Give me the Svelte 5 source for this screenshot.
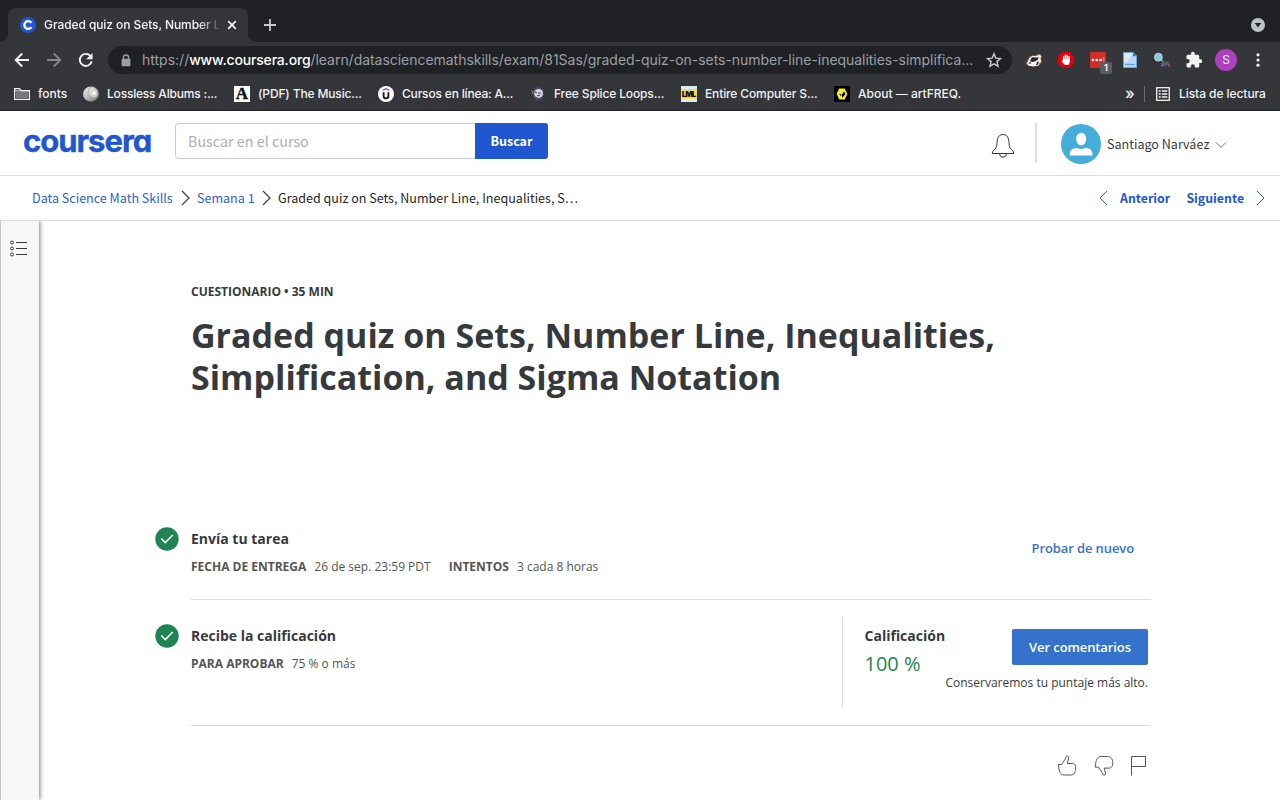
<script>
  const bookmarks = [
    { icon: 'folder', label: 'fonts', tracking: 0 },
    { icon: 'disc', label: 'Lossless Albums :...', tracking: -0.2 },
    { icon: 'letter', label: '(PDF) The Music...', tracking: -0.14 },
    { icon: 'udemy', label: 'Cursos en línea: A...', tracking: -0.18 },
    { icon: 'splice', label: 'Free Splice Loops...', tracking: -0.14 },
    { icon: 'lml', label: 'Entire Computer S...', tracking: -0.13 },
    { icon: 'freq', label: 'About — artFREQ.', tracking: 0 }
  ];
</script>

<div class="screen">
  <div class="tabs">
    <div class="tab">
      <svg class="fav" width="16" height="16" viewBox="0 0 16 16"><circle cx="8" cy="8" r="8" fill="#2156d1" /><path d="M11.3 5.9A3.8 3.8 0 1 0 11.3 10.1" fill="none" stroke="#fff" stroke-width="2.3" /></svg>
      <span class="tabtitle">Graded quiz on Sets, Number L</span>
      <svg class="close" width="10" height="10" viewBox="0 0 10 10"><path d="M1.2 1.2l7.6 7.6M8.8 1.2L1.2 8.8" stroke="#f1f3f4" stroke-width="1.7" /></svg>
    </div>
    <svg class="plus" width="14" height="14" viewBox="0 0 14 14"><path d="M7 1v12M1 7h12" stroke="#c8cacd" stroke-width="1.8" /></svg>
    <svg class="tabmenu" width="14" height="14" viewBox="0 0 14 14"><circle cx="7" cy="7" r="7" fill="#bdc1c6" /><path d="M3.8 5h6.4L7 9.4z" fill="#202124" /></svg>
  </div>

  <div class="toolbar">
    <svg class="nav" width="16" height="16" viewBox="0 0 16 16"><path d="M15 8H2M8.2 1.5L1.7 8l6.5 6.5" fill="none" stroke="#f1f3f4" stroke-width="1.9" /></svg>
    <svg class="nav" width="16" height="16" viewBox="0 0 16 16"><path d="M1 8h13M7.8 1.5L14.3 8l-6.5 6.5" fill="none" stroke="#85878a" stroke-width="1.8" /></svg>
    <svg class="nav" width="16" height="16" viewBox="0 0 16 16"><path d="M13.7 9.2A6 6 0 1 1 12.3 3.9" fill="none" stroke="#f1f3f4" stroke-width="1.9" /><path d="M14.5 1v6.3H8.2z" fill="#f1f3f4" /></svg>
    <div class="address">
      <svg class="lock" width="10" height="13" viewBox="0 0 10 13"><path d="M2.4 5.5V3.6a2.6 2.6 0 0 1 5.2 0v1.9" fill="none" stroke="#9aa0a6" stroke-width="1.4" /><rect x=".6" y="4.8" width="8.8" height="7.4" rx="1" fill="#9aa0a6" /></svg>
      <span class="url"><span class="scheme">https://</span><span class="host">www.coursera.org</span><span class="path">/learn/datasciencemathskills/exam/81Sas/graded-quiz-on-sets-number-line-inequalities-simplifica...</span></span>
      <svg class="star" width="16" height="16" viewBox="0 0 16 16"><path d="M8 1.7l1.8 4.4 4.7.4-3.6 3.1 1.1 4.6L8 11.8l-4 2.4 1.1-4.6-3.6-3.1 4.7-.4z" fill="none" stroke="#c8cacd" stroke-width="1.4" /></svg>
    </div>
    <div class="extensions">
      <svg width="18" height="16" viewBox="0 0 18 16"><path d="M1.5 11.5L5 5l3-1.6 2 .6 5-1.6 1.5 2-1 2.2 1 3.1-3 3.8-5 1-5-.8z" fill="#f7f3ee" /><path d="M7 5.2l3 .2 4 .2-1.6 2.4L9.6 9.6 7 10l-2-1zM3 11.6l2-1.8 1.4 1.8zM12 10l2-.6-1 3-2 .8z" fill="#24272b" /><path d="M4.4 5.6l2-1.6M11.5 3l4-.8M1 10.6l1.4 2M14 12.6l2-2.4M2.6 8.4l1-2" stroke="#c4693d" stroke-width="1.1" /></svg>
      <svg width="18" height="16" viewBox="0 0 18 16"><path d="M5.5 0h7L17 4.6v6.8L12.5 16h-7L1 11.4V4.6z" fill="#e3000b" /><path d="M6.6 8V4.6M8.4 7.5V3.2M10.2 7.5V3.4M12 9V4.8" stroke="#fff" stroke-width="1.4" stroke-linecap="round" /><path d="M5.9 7h6.8v3.5L11.4 13H8L4.6 9.4l1-.8z" fill="#fff" /></svg>
      <span class="pass"><svg width="16" height="16" viewBox="0 0 16 16"><rect width="16" height="16" rx="1.5" fill="#d32d27" /><circle cx="3" cy="8" r="1.3" fill="#fff" /><circle cx="6.8" cy="8" r="1.3" fill="#fff" /><circle cx="10.5" cy="8" r="1.3" fill="#fff" /><path d="M13.8 5v4.5" stroke="#f0a09c" /></svg><b>1</b></span>
      <svg width="16" height="16" viewBox="0 0 16 16"><path d="M1.5.5h9.7l3.3 3.4v11.6h-13z" fill="#b9d9fa" stroke="#6ea4df" /><path d="M2 1h9l-6 9H2z" fill="#d9eafd" /><path d="M11 .5v3.7h3.5z" fill="#316fb8" /><path d="M3 12.4h10" stroke="#4d9be7" /></svg>
      <svg width="18" height="16" viewBox="0 0 18 16"><path d="M8.5 8l3 3" stroke="#8e929b" stroke-width="1.6" /><circle cx="5.4" cy="5.2" r="3.9" fill="#82cbe0" stroke="#b3dce5" /><path d="M8 12l2-3 2 1 3-1 1 3 1 1-3 0-3 2-3-2z" fill="#4b607d" /><path d="M15 12l2 3M10 13l-2 1" stroke="#bd5b48" stroke-width="1.2" /></svg>
      <svg width="18" height="18" viewBox="0 0 24 24"><path d="M20.5 11H19V7a2 2 0 0 0-2-2h-4V3.5a2.5 2.5 0 0 0-5 0V5H4a2 2 0 0 0-2 2v3.8h1.5a2.7 2.7 0 0 1 0 5.4H2V20a2 2 0 0 0 2 2h3.8v-1.5a2.7 2.7 0 0 1 5.4 0V22H17a2 2 0 0 0 2-2v-4h1.5a2.5 2.5 0 0 0 0-5z" fill="#f1f3f4" /></svg>
      <span class="user">S</span>
      <svg width="6" height="16" viewBox="0 0 6 16"><circle cx="3" cy="2.8" r="1.6" fill="#f1f3f4" /><circle cx="3" cy="8" r="1.6" fill="#f1f3f4" /><circle cx="3" cy="13.2" r="1.6" fill="#f1f3f4" /></svg>
    </div>
  </div>

  <div class="bookmarks">
    {#each bookmarks as b}
      <div class="bookmark">
        {#if b.icon === 'folder'}
          <svg width="16" height="16" viewBox="0 0 16 16"><path d="M.6 13.4V2.6h5l1.5 2h8.3v8.8z" fill="none" stroke="#f1f3f4" stroke-width="1.2" /><path d="M2 6h12v6H2z" fill="#77797b" /><path d="M1 4.9h14" stroke="#f1f3f4" /></svg>
        {:else if b.icon === 'disc'}
          <svg width="16" height="16" viewBox="0 0 16 16"><defs><linearGradient id="silver" x1="0" y1="0" x2="1" y2="1"><stop offset="0" stop-color="#eee" /><stop offset=".5" stop-color="#bbb" /><stop offset="1" stop-color="#666" /></linearGradient></defs><ellipse cx="8" cy="8" rx="8" ry="7.6" fill="url(#silver)" /><ellipse cx="10" cy="6.5" rx="4.4" ry="5.6" transform="rotate(-25 10 6.5)" fill="#ddd" stroke="#999" stroke-width=".6" opacity=".8" /><circle cx="11" cy="7" r="1.8" fill="#fafafa" /></svg>
        {:else if b.icon === 'letter'}
          <span class="letter">A</span>
        {:else if b.icon === 'udemy'}
          <svg width="16" height="16" viewBox="0 0 16 16"><circle cx="8" cy="8" r="8" fill="#fff" /><path d="M5.6 6.2v3.8a2.4 2.4 0 0 0 4.8 0V6.2" fill="none" stroke="#1c1d1f" stroke-width="1.9" /><path d="M4.9 4.4L8 2.7l3.1 1.7" fill="none" stroke="#a435f0" stroke-width="1.4" /></svg>
        {:else if b.icon === 'splice'}
          <svg width="16" height="16" viewBox="0 0 16 16"><path d="M3 3l5-2 5 2 1 6-2 4-5 2-4-4z" fill="#494766" /><ellipse cx="8.6" cy="7.4" rx="4.4" ry="4.5" fill="#d9d9e0" /><path d="M5 6l2 1M8 7h3M7 10l3-1" stroke="#4a4a5e" stroke-width="1.2" /><path d="M1 4l2 2-1 2" stroke="#7b79ad" fill="none" /></svg>
        {:else if b.icon === 'lml'}
          <span class="lml">LML</span>
        {:else}
          <svg width="16" height="16" viewBox="0 0 16 16"><rect width="16" height="16" fill="#000" /><path d="M5.3 2.5h5.4L13.4 8l-2.7 5.5H5.3L2.6 8z" fill="#f4ee31" /><path d="M8 12V8.2L10.2 5.4l1.2 2.8zM4.8 7.4l2.6 1v2.2z" fill="#000" /></svg>
        {/if}
        <span style="letter-spacing: {b.tracking}px">{b.label}</span>
      </div>
    {/each}
    <span class="more">»</span>
    <span class="bar"></span>
    <svg class="readicon" width="14" height="14" viewBox="0 0 14 14"><rect x=".7" y=".7" width="12.6" height="12.6" fill="none" stroke="#f1f3f4" stroke-width="1.3" /><path d="M2.7 4h2M2.7 7h2M2.7 10h2M5.8 4h5.5M5.8 7h5.5M5.8 10h5.5" stroke="#f1f3f4" stroke-width="1.5" /></svg>
    <span class="reading">Lista de lectura</span>
  </div>

  <header>
    <span class="logo">coursera</span>
    <div class="search"><span class="field">Buscar en el curso</span><span class="go">Buscar</span></div>
    <svg class="bell" width="24" height="26" viewBox="0 0 24 26"><path d="M1.2 20.5c0-3.5 4.1-3.8 4.6-8.2.4-4 0-10.8 6.2-10.8s5.8 6.8 6.2 10.8c.5 4.4 4.6 4.7 4.6 8.2zM8.6 20.8a3.4 3.4 0 0 0 6.8 0" fill="none" stroke="#373a3c" /></svg>
    <span class="vline"></span>
    <svg class="avatar" width="40" height="40" viewBox="0 0 40 40"><circle cx="20" cy="20" r="20" fill="#45add9" /><ellipse cx="20.2" cy="15" rx="5" ry="6.3" fill="#fff" /><path d="M8.7 31.6c0-5.8 2.3-7.5 7.4-7.7 2.4 1.5 5.6 1.5 8 0 5.2.2 7.5 2 7.5 7.7z" fill="#fff" /></svg>
    <span class="name">Santiago Narváez</span>
    <svg class="caret" width="12" height="8" viewBox="0 0 12 8"><path d="M1 1.4l5 5 5-5" fill="none" stroke="#6f7377" /></svg>
  </header>

  <nav class="crumbs">
    <span class="c1">Data Science Math Skills</span>
    <svg width="9" height="16" viewBox="0 0 9 16"><path d="M1 1l7 7-7 7" fill="none" stroke="#373a3c" stroke-width="1.2" /></svg>
    <span class="c2">Semana 1</span>
    <svg width="9" height="16" viewBox="0 0 9 16"><path d="M1 1l7 7-7 7" fill="none" stroke="#373a3c" stroke-width="1.2" /></svg>
    <span class="c3">Graded quiz on Sets, Number Line, Inequalities, S…</span>
    <div class="steps">
      <svg width="9" height="16" viewBox="0 0 9 16"><path d="M8 1L1 8l7 7" fill="none" stroke="#2a62d4" /></svg>
      <b class="prev">Anterior</b><b class="next">Siguiente</b>
      <svg width="9" height="16" viewBox="0 0 9 16"><path d="M1 1l7 7-7 7" fill="none" stroke="#2a62d4" /></svg>
    </div>
  </nav>

  <div class="page">
    <aside>
      <svg width="18" height="18" viewBox="0 0 18 18"><g fill="none" stroke="#373a3c"><circle cx="2" cy="2.5" r="1.5" /><circle cx="2" cy="8.5" r="1.5" /><circle cx="2" cy="14.5" r="1.5" /><path d="M6 2.5h11M6 8.5h11M6 14.5h11" /></g></svg>
    </aside>
    <main>
      <div class="kind">CUESTIONARIO • 35 MIN</div>
      <h1>Graded quiz on Sets, Number Line, Inequalities,<br />Simplification, and Sigma Notation</h1>
      <section class="submit">
        <svg class="check" width="24" height="24" viewBox="0 0 24 24"><circle cx="12" cy="12" r="11.7" fill="#1f8354" /><path d="M6.3 11.5l4 4 7.5-7.5" fill="none" stroke="#fff" stroke-width="1.7" /></svg>
        <div class="info">
          <h2>Envía tu tarea</h2>
          <p><b class="due">FECHA DE ENTREGA</b><span class="date">26 de sep. 23:59 PDT</span><b class="tries">INTENTOS</b><span>3 cada 8 horas</span></p>
        </div>
        <span class="retry">Probar de nuevo</span>
      </section>
      <section class="result">
        <svg class="check" width="24" height="24" viewBox="0 0 24 24"><circle cx="12" cy="12" r="11.7" fill="#1f8354" /><path d="M6.3 11.5l4 4 7.5-7.5" fill="none" stroke="#fff" stroke-width="1.7" /></svg>
        <div class="info">
          <h2 class="receive">Recibe la calificación</h2>
          <p><b class="topass">PARA APROBAR</b><span>75 % o más</span></p>
        </div>
        <div class="grade">
          <div><h2>Calificación</h2><div class="score">100 %</div></div>
          <div class="feedback"><span class="view">Ver comentarios</span><span class="keep">Conservaremos tu puntaje más alto.</span></div>
        </div>
      </section>
      <div class="reactions">
        <svg width="20" height="21" viewBox="0 0 20 21"><path d="M1.5 9.5h3.2c1.5-3 3.6-4.6 4.2-7.2.4-1.8 2.7-1.8 2.7.2 0 2-.7 3.6-1.3 6h5c2.2 0 3.5 1.6 3.4 4.3-.1 4.5-1.5 7.2-5 7.2H7.3c-4 0-5.5-3.6-5.8-10.5z" fill="none" stroke="#50555c" /></svg>
        <svg width="20" height="21" viewBox="0 0 20 21"><path d="M1.3 12.2h3.2c1.6 3 3.7 4.5 4.3 6.7.5 1.8 2.7 1.7 2.7-.2 0-2-.7-3.3-1.4-5.6h5c2.2 0 3.7-1.8 3.7-4.8 0-4.3-1.8-6.8-5.3-6.8H7.3c-3.8 0-5.7 3.3-6 10.7z" fill="none" stroke="#50555c" /></svg>
        <svg width="16" height="21" viewBox="0 0 16 21"><path d="M.5 20.5v-19h14v10H.5" fill="none" stroke="#50555c" /></svg>
      </div>
    </main>
  </div>
</div>

<style>
  :global(body) { margin: 0; background: #fff; overflow: hidden; }
  .screen { width: 1280px; height: 800px; display: flex; flex-direction: column; overflow: hidden; font-family: "Open Sans", sans-serif; color: #373a3c; }
  .screen * { box-sizing: border-box; }
  svg { display: block; flex: none; }
  span, b { white-space: nowrap; }
  .tabs, .toolbar, .bookmarks { font-family: Inter, sans-serif; color: #f1f3f4; display: flex; align-items: center; flex: none; }
  .tabs { height: 42px; background: #202124; padding: 8px 15px 0 8px; }
  .tab { width: 240px; height: 34px; background: #35363a; border-radius: 8px 8px 0 0; display: flex; align-items: center; padding-left: 12px; position: relative; }
  .tab::before, .tab::after { content: ""; position: absolute; bottom: 0; width: 8px; height: 8px; }
  .tab::before { left: -8px; background: radial-gradient(circle at 0 0, transparent 7.5px, #35363a 8px); }
  .tab::after { right: -8px; background: radial-gradient(circle at 100% 0, transparent 7.5px, #35363a 8px); }
  .tabtitle { width: 175px; margin: -1px 0 0 8px; font-size: 12px; font-weight: 500; letter-spacing: -.08px; -webkit-mask-image: linear-gradient(90deg, #000 155px, transparent 178px); mask-image: linear-gradient(90deg, #000 155px, transparent 178px); }
  .close { margin-left: 8px; }
  .plus { margin-left: 15px; }
  .tabmenu { margin-left: auto; }
  .toolbar { height: 36px; background: #35363a; padding-left: 14px; }
  .nav { margin-right: 16px; }
  .address { width: 904px; height: 28px; border-radius: 14px; background: #202124; display: flex; align-items: center; padding-left: 13px; margin-left: -2px; }
  .url { width: 832px; margin-left: 11px; margin-top: -2px; font-size: 14px; color: #9aa0a6; }
  .host { color: #fff; font-weight: 500; letter-spacing: -.17px; }
  .path { letter-spacing: -.035px; }
  .star { margin-left: 12px; }
  .extensions { display: grid; grid-template-columns: 32px 32px 32px 32px 32px 32px 32px 32px; align-items: center; justify-items: center; margin-left: 6px; }
  .pass { position: relative; }
  .pass b { position: absolute; left: 10px; top: 10px; width: 12px; height: 12px; background: #5b5c5e; border-radius: 2px; font-size: 9px; line-height: 12px; text-align: center; }
  .user { width: 22px; height: 22px; border-radius: 50%; background: #ab3fbd; font-size: 12px; line-height: 22px; text-align: center; }
  .bookmarks { height: 33px; background: #35363a; border-bottom: 1px solid #202124; padding-left: 14px; font-size: 12px; font-weight: 500; display: grid; grid-template-columns: 69px 151px 144px 152px 151px 153px 291px 19px 12px 23px auto; }
  .bookmark { display: flex; align-items: center; gap: 8px; }
  .bookmark > span, .reading { margin-top: -1px; }
  .reading { letter-spacing: -.06px; }
  .bookmark > .letter { width: 16px; height: 16px; margin: 0; background: #fff; color: #111; font: 700 17px/16px "Liberation Serif", serif; text-align: center; -webkit-text-stroke: .4px #111; }
  .bookmark > .lml { width: 16px; height: 16px; margin: 0; background: linear-gradient(#d5edf7 3px, #f5da64 3px 13px, #d5edf7 13px); color: #111; font: 900 8px/16px Inter, sans-serif; letter-spacing: -1px; text-align: center; padding-right: 1px; }
  .more { font-size: 16px; line-height: 16px; margin-top: -2px; }
  .bar { width: 1px; height: 16px; background: #6b6d70; }
  header { height: 65px; flex: none; border-bottom: 1px solid #dcdcdc; display: flex; align-items: center; padding-left: 23px; font-family: "Noto Sans CJK SC", sans-serif; }
  .logo { width: 152px; margin-top: -5px; font: 700 31px/36px Inter, sans-serif; font-feature-settings: "cv11"; letter-spacing: -1.02px; color: #2156d1; -webkit-text-stroke: .4px #2156d1; }
  .search { width: 373px; height: 36px; display: flex; margin-top: -5px; }
  .field { width: 300px; border: 1px solid #c7cad8; border-right: 0; border-radius: 4px 0 0 4px; padding-left: 12px; font-size: 14.33px; line-height: 33px; color: #aeaeae; }
  .go { width: 73px; background: #2156d1; color: #fff; font-size: 12.5px; font-weight: 700; line-height: 36px; text-align: center; border-radius: 0 3px 3px 0; }
  .bell { margin-left: 443px; margin-top: 6px; }
  .vline { width: 2px; height: 40px; background: #e0e0e0; margin-left: 20px; }
  .avatar { margin: 1px 6px 0 24px; }
  .name { width: 108px; font-size: 12.55px; }
  .caret { margin-top: 3px; }
  .crumbs { height: 45px; flex: none; border-bottom: 1px solid #dcdcdc; display: flex; align-items: center; padding-left: 32px; font: 12.55px "Noto Sans CJK SC", sans-serif; color: #1f1f1f; }
  .c1, .c2, .c3 { margin-top: -2px; }
  .c1 { width: 149px; color: #2a62d4; }
  .c2 { width: 65px; margin-left: 7px; color: #2a62d4; }
  .c3 { margin-left: 7px; }
  .steps { margin-left: auto; margin-right: 15px; display: flex; align-items: center; color: #2156d1; }
  .prev { margin-left: 12px; width: 66.4px; font-size: 12.35px; }
  .next { width: 69.6px; font-size: 12.35px; }
  .page { display: flex; flex: 1; }
  aside { width: 39px; flex: none; background: #f7f7f7; border-left: 1px solid #c8c8c8; box-shadow: 1px 0 4px rgba(0, 0, 0, .5); padding: 19px 0 0 9px; clip-path: inset(0 -8px 0 0); }
  main { width: 995px; margin-left: 117px; padding-top: 61px; }
  .kind { margin-left: 35px; font-size: 12px; line-height: 20px; font-weight: 700; }
  h1 { margin: 12px 0 0 35px; font-size: 34px; line-height: 42px; font-weight: 700; white-space: nowrap; }
  section { display: flex; position: relative; }
  .check { margin-left: -1px; }
  .info { margin-left: 12px; }
  h2 { margin: 0; font-size: 14px; line-height: 24px; font-weight: 700; }
  p { margin: 6px 0 0; font-size: 12px; line-height: 20px; color: #555; display: flex; }
  p b { margin-right: 8px; }
  .date { margin-right: 18px; }
  .submit { margin-top: 129px; height: 73px; }
  .retry { margin: 11px 17px 0 auto; font-size: 13px; line-height: 20px; font-weight: 600; letter-spacing: -.1px; color: #3472cb; }
  .result { height: 126px; padding-top: 24px; }
  .submit::after, .result::after { content: ""; position: absolute; left: 35px; right: 0; bottom: 0; height: 1px; background: #dcdcdc; }
  .grade { display: flex; width: 309px; height: 90px; margin: -7px 0 0 auto; border-left: 1px solid #dcdcdc; padding: 7px 3px 0 21.5px; }
  .score { font-size: 20px; line-height: 32px; color: #1f8354; }
  .feedback { margin-left: auto; display: flex; flex-direction: column; align-items: flex-end; margin-top: 5px; }
  .view { width: 136px; height: 36px; background: #3472cb; border-radius: 2px; color: #fff; font-size: 13px; font-weight: 600; letter-spacing: -.1px; line-height: 36px; text-align: center; }
  .keep { font-size: 12px; line-height: 20px; margin-top: 8px; margin-left: -30px; }
  .reactions { display: flex; justify-content: flex-end; gap: 17px; margin: 29px 4px 0 0; }
</style>
